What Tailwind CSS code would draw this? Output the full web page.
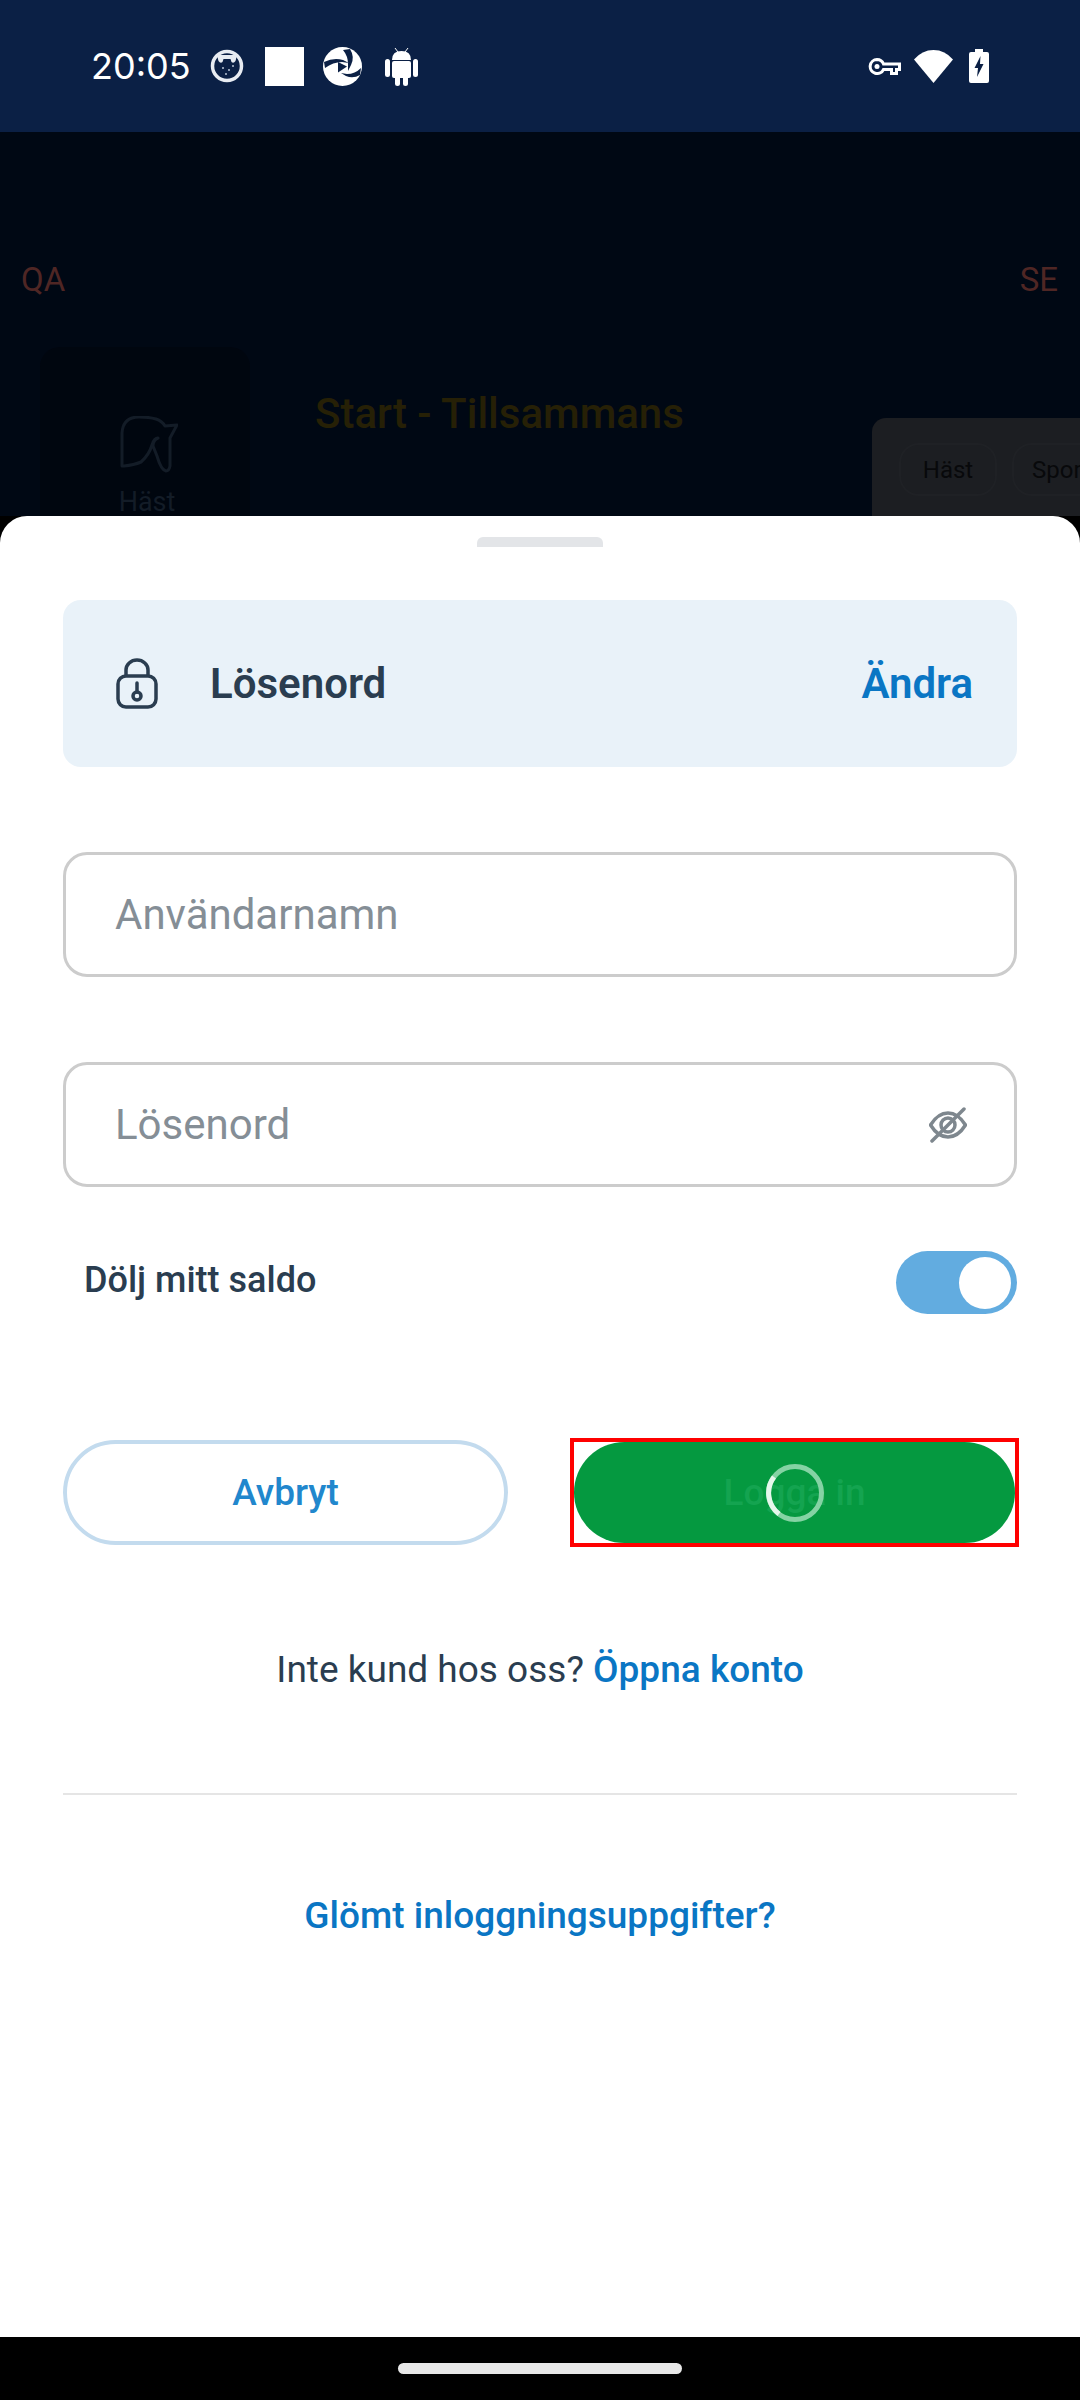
<!DOCTYPE html>
<html lang="sv">
<head>
    <meta charset="UTF-8">
    <meta name="viewport" content="width=device-width, initial-scale=1.0">
    <title>Logga in</title>
    <script src="https://cdn.jsdelivr.net/npm/@tailwindcss/browser@4"></script>
</head>
<body class="bg-black font-['Roboto',sans-serif]">
<div class="w-[1080px] h-[2400px] flex flex-col overflow-hidden">

    <!-- Status bar -->
    <div class="h-[132px] shrink-0 bg-[#0b2045] flex items-center pl-[91px] pr-[91px] text-white">
        <span class="font-['Inter',sans-serif] text-[36px] leading-none w-[119px]">20:05</span>
        <svg class="w-[34px] h-[34px]" viewBox="0 0 34 34">
            <circle cx="17" cy="17" r="14.500" fill="#0b2045" stroke="#e8ecf2" stroke-width="3.500"/>
            <path d="M7 6h20l-1.500 6q-2 3-4 1l-1-3h-7l-1 3q-2 2-4-1z" fill="#e8ecf2"/>
            <circle cx="13" cy="19" r="1" fill="#b9c3d4"/><circle cx="19" cy="21" r="1" fill="#b9c3d4"/><circle cx="23" cy="17" r="1" fill="#b9c3d4"/><circle cx="16" cy="25" r="1" fill="#b9c3d4"/>
        </svg>
        <div class="w-[39px] h-[39px] bg-white ml-[21px]"></div>
        <svg class="w-[39px] h-[39px] ml-[19px]" viewBox="0 0 39 39">
            <circle cx="19.500" cy="19.500" r="19.500" fill="#fff"/>
            <path d="M1 15q10-5 19-2l6 3-7-1q-9 0-17 6zM27 2q5 8 1 16l-3 6 0-7q0-8-5-14z" fill="#0b2045"/>
            <path d="M37 28q-7 4-14 1l-5-3 6 1q8 0 14-6z" fill="#0b2045"/>
            <path d="M15 15l9 4.500-9 6z" fill="#0b2045"/>
        </svg>
        <svg class="w-[33px] h-[39px] ml-[23px]" viewBox="0 0 33 39" fill="#fff">
            <path d="M10 1l3 4M23 1l-3 4" stroke="#fff" stroke-width="1"/>
            <path d="M7 13q0-9 9.500-9T26 13z"/>
            <rect x="7" y="14" width="19" height="17" rx="2"/>
            <rect x="0" y="12" width="5" height="18" rx="2.500"/>
            <rect x="28" y="12" width="5" height="18" rx="2.500"/>
            <rect x="10" y="28" width="5" height="11" rx="2.500"/>
            <rect x="18" y="28" width="5" height="11" rx="2.500"/>
        </svg>
        <div class="ml-auto flex items-center">
            <svg class="w-[33px] h-[17px]" viewBox="0 0 33 17">
                <path d="M9 1.500a7 7 0 0 1 6.500 4.500H31.500v5.500h-3v4h-5v-4h-8A7 7 0 1 1 9 1.500z" fill="none" stroke="#fff" stroke-width="3"/>
                <circle cx="9" cy="8.500" r="2.500" fill="#fff"/>
            </svg>
            <svg class="w-[39px] h-[33px] ml-[13px]" viewBox="0 0 39 33">
                <path d="M19.500 33L0 9.500Q8 0 19.500 0T39 9.500z" fill="#fff"/>
            </svg>
            <svg class="w-[20px] h-[34px] ml-[16px]" viewBox="0 0 20 34">
                <path d="M6 0h8v3h4q2 0 2 2v27q0 2-2 2H2q-2 0-2-2V5q0-2 2-2h4z" fill="#fff"/>
                <path d="M11.500 7L5.500 19h3.500l-1 9 6.500-13H11z" fill="#0b2045"/>
            </svg>
        </div>
    </div>

    <!-- Dimmed page behind the sheet -->
    <div class="h-[384px] shrink-0 bg-[#000814] overflow-hidden">
        <div class="flex justify-between pl-[21px] pr-[22px] pt-[130px] text-[33px] leading-[36px] text-[#4f2624]">
            <span>QA</span>
            <span>SE</span>
        </div>
        <div class="flex mt-[49px]">
            <div class="w-[210px] ml-[40px] h-[200px] rounded-t-[20px] bg-[#00060f] flex flex-col items-center pt-[69px]">
                <svg class="w-[58px] h-[57px] ml-[8px]" viewBox="0 0 58 57" fill="none" stroke="#131c27" stroke-width="3" stroke-linejoin="round">
                    <path d="M2 50V17Q3 1 19 1q10 0 17 2 6 2 9 7l12-1-7 13v28q-1 5-4 5-5-1-9-15l-4-10q0-6 5-8-4 0-6 7-3 10-11 17-7 3-17 4z"/>
                </svg>
                <span class="text-[27px] leading-[30px] mt-[14px] ml-[4px] text-[#131c27]">Häst</span>
            </div>
            <div class="ml-[65px] mt-[42px] text-[42px] leading-[50px] font-medium text-[#262006]">Start - Tillsammans</div>
            <div class="ml-auto mt-[71px] w-[208px] h-[100px] rounded-tl-[14px] bg-[#1c1e22] flex gap-[15px] pl-[27px] pt-[25px] overflow-hidden">
                <div class="w-[98px] h-[53px] shrink-0 rounded-[20px] border-[2px] border-[#1f2125] flex items-center justify-center text-[24px] text-[#08090b]">Häst</div>
                <div class="w-[98px] h-[53px] shrink-0 rounded-[20px] border-[2px] border-[#1f2125] flex items-center justify-center text-[24px] text-[#08090b]">Sport</div>
            </div>
        </div>
    </div>

    <!-- Sheet -->
    <div class="relative flex-1 bg-white rounded-t-[27px] px-[63px]">
        <div class="w-[126px] h-[10px] mx-auto mt-[21px] rounded-t-[6px] bg-[#e3e5e8]"></div>

        <div class="mt-[53px] h-[167px] rounded-[18px] bg-[#e9f2f9] flex items-center pl-[53px] pr-[44px]">
            <svg class="w-[42px] h-[51px]" viewBox="0 0 42 51" fill="none" stroke="#2a3d50" stroke-width="3.500">
                <path d="M10 18V12a11 10 0 0 1 22 0v6"/>
                <rect x="2" y="18" width="38" height="31" rx="8"/>
                <path d="M21 25v9" stroke-linecap="round"/>
                <circle cx="21" cy="38" r="4"/>
            </svg>
            <span class="ml-[52px] text-[42px] font-semibold text-[#2a3d50]">Lösenord</span>
            <span class="ml-auto text-[42px] font-semibold text-[#0a76c4]">Ändra</span>
        </div>

        <div class="mt-[85px] h-[125px] rounded-[24px] border-[3px] border-[#cccccc] flex items-center pl-[49px] text-[42px] text-[#858e96]">Användarnamn</div>

        <div class="mt-[85px] h-[125px] rounded-[24px] border-[3px] border-[#cccccc] flex items-center pl-[49px] pr-[47px] text-[42px] text-[#858e96]">
            <span>Lösenord</span>
            <svg class="ml-auto w-[38px] h-[36px]" viewBox="0 0 38 36" fill="none" stroke="#7e878e" stroke-width="3.500">
                <path d="M1.500 18Q9 6 19 6t17.500 12Q29 30 19 30T1.500 18z"/>
                <circle cx="19" cy="18" r="7"/>
                <path d="M3 34L35 2" stroke-linecap="round"/>
            </svg>
        </div>

        <div class="mt-[64px] flex items-center h-[63px]">
            <span class="ml-[21px] -mt-[5px] text-[36px] font-medium text-[#2a3d50]">Dölj mitt saldo</span>
            <div class="ml-auto w-[121px] h-[63px] rounded-full bg-[#62ace0] flex items-center justify-end pr-[6px]">
                <div class="w-[52px] h-[52px] rounded-full bg-white"></div>
            </div>
        </div>

        <div class="mt-[124px] flex justify-between items-center">
            <div class="w-[445px] h-[105px] rounded-full border-[4px] border-[#c3dbee] flex items-center justify-center text-[37px] font-medium text-[#2187cd]">Avbryt</div>
            <div class="relative w-[449px] h-[109px] border-[4px] border-[#ff0000] -mr-[2px] bg-white">
                <div class="h-full rounded-full bg-[#059940] flex items-center justify-center text-[37px] font-medium text-[#14a450]">Logga in</div>
                <svg class="absolute left-[192px] top-[22px] w-[58px] h-[58px]" viewBox="0 0 58 58" fill="none" stroke-width="5">
                    <circle cx="29" cy="29" r="26.500" stroke="#85d3a4"/>
                    <path d="M13 50A26.500 26.500 0 0 1 8 13" stroke="#e6f7ec"/>
                </svg>
            </div>
        </div>

        <p class="mt-[102px] text-center text-[37px] leading-[42px] text-[#2a3d50]">Inte kund hos oss? <span class="font-medium text-[#0a76c4]">Öppna konto</span></p>

        <div class="mt-[102px] h-[2px] bg-[#e5e5e5]"></div>

        <p class="mt-[100px] text-center text-[37px] leading-[42px] font-medium text-[#0a76c4]">Glömt inloggningsuppgifter?</p>
    </div>

    <!-- Navigation bar -->
    <div class="h-[63px] shrink-0 bg-black flex justify-center pt-[26px]">
        <div class="w-[284px] h-[11px] rounded-full bg-[#e8e8e8]"></div>
    </div>
</div>
</body>
</html>
